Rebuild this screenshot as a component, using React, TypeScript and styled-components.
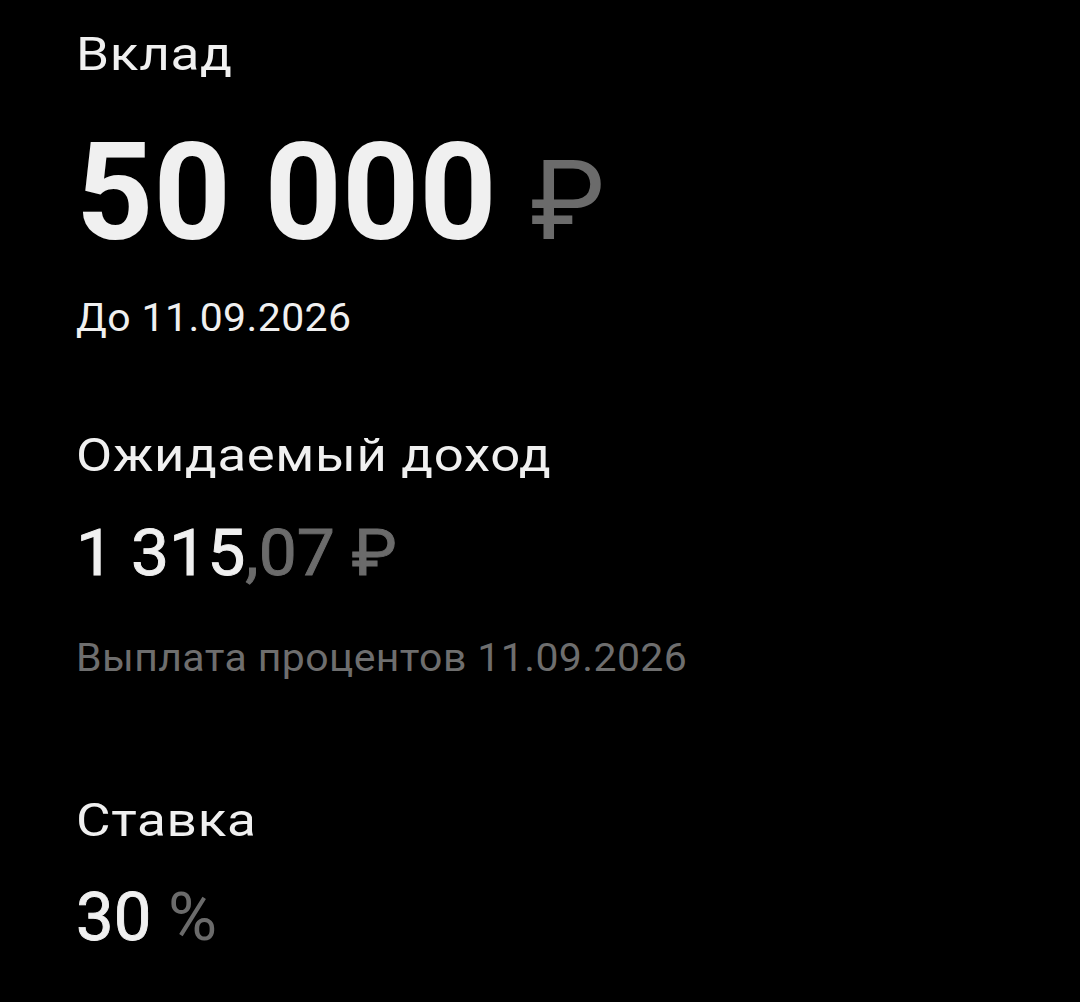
import React from 'react';
import styled, { createGlobalStyle } from 'styled-components';

const GlobalStyle = createGlobalStyle`
  html, body {
    margin: 0;
    padding: 0;
    background: #000;
  }
  body {
    font-family: Roboto, "Noto Sans", sans-serif;
    color: #f0f0f0;
  }
`;

const Screen = styled.div`
  width: 1080px;
  height: 1002px;
  background: #000;
  box-sizing: border-box;
  padding: 22px 76px 0 76px;
  display: flex;
  flex-direction: column;
`;

// the device font is a touch wider than Roboto, so stretch it a little
const Stretch = styled.span<{ x: number }>`
  display: inline-block;
  transform: scaleX(${p => p.x});
  transform-origin: left center;
  white-space: pre;
`;

const Label = styled.div`
  font-size: 47px;
  line-height: 64px;
  font-weight: 400;
  letter-spacing: 0.6px;
  color: #f0f0f0;
`;

// medium weight faked from regular + a thin stroke
const Amount = styled.div<{ size: number; offset: number; bold?: boolean }>`
  margin-top: ${p => p.offset}px;
  font-size: ${p => p.size}px;
  font-weight: ${p => (p.bold ? 700 : 400)};
  -webkit-text-stroke: ${p => (p.bold ? '0' : '0.9px')} currentColor;
  line-height: 1.2;
  color: #f0f0f0;
  white-space: pre;
`;

const Dim = styled.span<{ size?: number; thin?: boolean }>`
  color: #6b6b6b;
  font-size: ${p => (p.size ? `${p.size}px` : 'inherit')};
  font-weight: ${p => (p.thin ? 400 : 'inherit')};
  -webkit-text-stroke: ${p => (p.thin ? '0' : 'inherit')};
`;

const Note = styled.div<{ muted?: boolean; offset: number }>`
  margin-top: ${p => p.offset}px;
  font-size: 39px;
  line-height: 48px;
  letter-spacing: 0.4px;
  color: ${p => (p.muted ? '#6e6e6e' : '#f0f0f0')};
`;

const Block = styled.section<{ gap: number }>`
  display: flex;
  flex-direction: column;
  margin-top: ${p => p.gap}px;
`;

export default function App() {
  return (
    <>
      <GlobalStyle />
      <Screen>
        <Block gap={0}>
          <Label><Stretch x={1.13}>Вклад</Stretch></Label>
          <Amount size={135} bold offset={26}>
            50 000 <Dim size={112} thin>₽</Dim>
          </Amount>
          <Note offset={20}><Stretch x={1.05}>До 11.09.2026</Stretch></Note>
        </Block>
        <Block gap={81}>
          <Label><Stretch x={1.12}>Ожидаемый доход</Stretch></Label>
          <Amount size={64} offset={29}>
            <Stretch x={1.06}>1 315<Dim>,07 ₽</Dim></Stretch>
          </Amount>
          <Note muted offset={41}><Stretch x={1.05}>Выплата процентов 11.09.2026</Stretch></Note>
        </Block>
        <Block gap={106}>
          <Label><Stretch x={1.13}>Ставка</Stretch></Label>
          <Amount size={67} offset={25}>
            30 <Dim thin>%</Dim>
          </Amount>
        </Block>
      </Screen>
    </>
  );
}
